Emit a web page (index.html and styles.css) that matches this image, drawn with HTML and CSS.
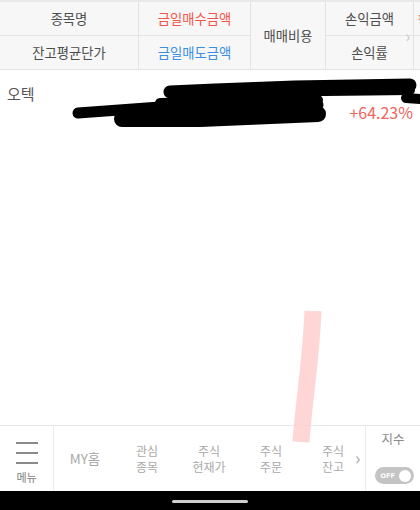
FILE: index.html
```html
<!DOCTYPE html>
<html lang="ko">
<head>
<meta charset="utf-8">
<link rel="stylesheet" href="styles.css">
</head>
<body>
<div class="screen">
  <div class="topline"></div>
  <div class="thead">
    <div class="cell">종목명</div>
    <div class="cell red">금일매수금액</div>
    <div class="cell span2">매매비용</div>
    <div class="cell">손익금액</div>
    <div class="cell edge"><span class="red">평</span></div>
    <div class="cell">잔고평균단가</div>
    <div class="cell blue">금일매도금액</div>
    <div class="cell">손익률</div>
    <div class="cell edge"></div>
    <span class="more">&#8250;</span>
  </div>
  <div class="content">
    <div class="row">
      <div class="name">오텍</div>
      <div class="rate">+64.23%</div>
    </div>
  </div>
  <nav class="nav">
    <div class="menu">
      <div class="burger"><i></i><i></i><i></i></div>
      <div class="menu-label">메뉴</div>
    </div>
    <div class="items">
      <div class="item big">MY홈</div>
      <div class="item">관심<br>종목</div>
      <div class="item">주식<br>현재가</div>
      <div class="item">주식<br>주문</div>
      <div class="item">주식<br>잔고</div>
      <span class="next">&#8250;</span>
    </div>
    <div class="index">
      <div class="index-label">지수</div>
      <div class="toggle"><span>OFF</span><b></b></div>
    </div>
  </nav>
  <div class="sysbar"><div class="home"></div></div>
  <svg class="marks" width="420" height="510" viewBox="0 0 420 510">
    <g stroke="#000" fill="none" stroke-linecap="round" stroke-linejoin="round">
      <path d="M170 92 L215 90 L295 87 L410 85" stroke-width="13"/>
      <path d="M240 92 L410 90" stroke-width="10"/>
      <path d="M406 98 L420 99" stroke-width="10"/>
      <path d="M78 113 L160 107 L240 105 L318 105" stroke-width="11"/>
      <path d="M122 119 L200 119 L318 114" stroke-width="16"/>
      <path d="M160 103 L318 100" stroke-width="10"/>
      <path d="M180 97 L300 95" stroke-width="8"/>
    </g>
    <path d="M313 311 C 311 360 304 400 301 442" stroke="#ffcfcf" stroke-opacity="0.85" stroke-width="17" fill="none"/>
  </svg>
</div>
</body>
</html>
```

FILE: styles.css
```css
html, body {
  margin: 0;
  padding: 0;
  background: #fff;
}
body {
  font-family: "Noto Sans CJK KR", "Noto Sans", sans-serif;
  color: #505050;
}
.screen {
  position: relative;
  width: 420px;
  height: 510px;
  display: flex;
  flex-direction: column;
  overflow: hidden;
}
.topline {
  height: 2px;
  background: #e9e9e9;
}
.thead {
  position: relative;
  display: grid;
  grid-template-columns: 138px 111px 74px 87px 1fr;
  grid-template-rows: 33px 33px;
  gap: 1px;
  background: #e3e3e3;
  border-bottom: 1px solid #e3e3e3;
}
.cell {
  background: #f7f7f7;
  display: flex;
  align-items: center;
  justify-content: center;
  font-size: 13.3px;
  color: #4d4d4d;
  white-space: nowrap;
  overflow: hidden;
}
.cell.span2 {
  grid-row: 1 / span 2;
  grid-column: 3;
}
.cell.edge {
  justify-content: flex-start;
  padding-left: 4px;
  font-size: 11px;
}
.red { color: #f4554a; }
.blue { color: #3b8ee2; }
.more {
  position: absolute;
  left: 405px;
  top: 23px;
  font-size: 18px;
  line-height: 20px;
  color: #cfcfcf;
}
.content {
  flex: 1;
}
.row {
  height: 60px;
  position: relative;
}
.name {
  position: absolute;
  left: 7px;
  top: 13px;
  font-size: 15px;
  line-height: 22px;
  color: #555;
}
.rate {
  position: absolute;
  right: 7px;
  top: 31px;
  font-size: 16px;
  line-height: 22px;
  color: #f0645a;
}
.nav {
  height: 65px;
  border-top: 1px solid #e6e6e6;
  display: flex;
  background: #fff;
}
.menu {
  width: 54px;
  border-right: 1px solid #ececec;
  display: flex;
  flex-direction: column;
  align-items: center;
  padding-top: 16px;
  box-sizing: border-box;
}
.burger {
  width: 22px;
  display: flex;
  flex-direction: column;
  gap: 8px;
  margin-left: 1px;
}
.burger i {
  display: block;
  height: 2px;
  background: #8a8a8a;
}
.menu-label {
  margin-top: 6px;
  font-size: 11px;
  line-height: 14px;
  color: #808080;
}
.items {
  position: relative;
  width: 311px;
  border-right: 1px solid #ececec;
  display: flex;
  align-items: center;
}
.item {
  width: 62px;
  text-align: center;
  font-size: 12px;
  line-height: 15.5px;
  color: #a9a9a9;
}
.item.big {
  font-size: 13.5px;
}
.next {
  position: absolute;
  left: 301px;
  top: 21px;
  font-size: 18px;
  line-height: 20px;
  color: #aaa;
}
.index {
  flex: 1;
  display: flex;
  flex-direction: column;
  align-items: center;
  padding-top: 5px;
}
.index-label {
  font-size: 12.5px;
  line-height: 16px;
  color: #8a8a8a;
}
.toggle {
  margin-top: 20px;
  margin-left: 2px;
  width: 39px;
  height: 17px;
  border-radius: 9px;
  background: #c4c4c4;
  display: flex;
  align-items: center;
  justify-content: space-between;
  padding: 0 3px 0 6px;
  box-sizing: border-box;
}
.toggle span {
  font-family: "DejaVu Sans", sans-serif;
  font-size: 6.5px;
  color: #fff;
  font-weight: bold;
}
.toggle b {
  width: 12px;
  height: 12px;
  border-radius: 50%;
  background: #fff;
}
.sysbar {
  height: 19px;
  background: #000;
  display: flex;
  justify-content: center;
  align-items: center;
}
.home {
  width: 76px;
  height: 3px;
  border-radius: 2px;
  background: #cfcfcf;
  margin-top: 2px;
}
.marks {
  position: absolute;
  left: 0;
  top: 0;
  pointer-events: none;
}
```
